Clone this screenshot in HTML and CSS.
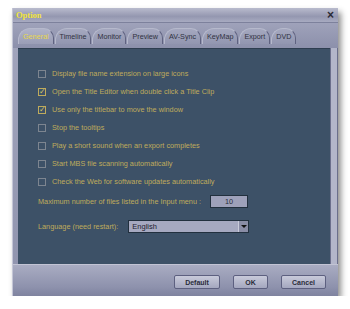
FILE: index.html
```html
<!DOCTYPE html>
<html>

<head>
    <meta charset="UTF-8" />
    <title>Option</title>
    <link rel="stylesheet" href="styles.css">
</head>

<body>
    <div class="window">
        <div class="titlebar">
            <span class="title">Option</span>
            <span class="close">&times;</span>
        </div>
        <div class="tabs">
            <span class="tab active">General</span>
            <span class="tab">Timeline</span>
            <span class="tab">Monitor</span>
            <span class="tab">Preview</span>
            <span class="tab">AV-Sync</span>
            <span class="tab">KeyMap</span>
            <span class="tab">Export</span>
            <span class="tab">DVD</span>
        </div>
        <div class="body">
            <div class="panel">
                <label class="option"><span class="box"></span>Display file name extension on large icons</label>
                <label class="option"><span class="box checked">&#10003;</span>Open the Title Editor when double click a Title Clip</label>
                <label class="option"><span class="box checked">&#10003;</span>Use only the titlebar to move the window</label>
                <label class="option"><span class="box"></span>Stop the tooltips</label>
                <label class="option"><span class="box"></span>Play a short sound when an export completes</label>
                <label class="option"><span class="box"></span>Start MBS file scanning automatically</label>
                <label class="option"><span class="box"></span>Check the Web for software updates automatically</label>
                <div class="field">
                    <span>Maximum number of files listed in the Input menu :</span>
                    <span class="number">10</span>
                </div>
                <div class="field">
                    <span>Language (need restart):</span>
                    <span class="select">English<span class="arrow"></span></span>
                </div>
            </div>
            <div class="edge"></div>
        </div>
        <div class="footer">
            <button class="btn default">Default</button>
            <button class="btn ok">OK</button>
            <button class="btn cancel">Cancel</button>
        </div>
    </div>
</body>

</html>
```

FILE: styles.css
```css
body {
    margin: 0;
    padding: 0;
    background: #ffffff;
    font-family: "Liberation Sans", Arial, sans-serif;
}

.window {
    margin: 8px 0 0 12px;
    width: 326px;
    height: 288px;
    display: flex;
    flex-direction: column;
    background: linear-gradient(#a3a6bd, #8f93ad);
    box-shadow: 3px 4px 6px rgba(0, 0, 0, 0.45);
    border-left: 1px solid #c4c6d6;
    box-sizing: border-box;
}

.titlebar {
    height: 14px;
    display: flex;
    align-items: center;
    justify-content: space-between;
    padding: 0 4px 0 3px;
    background: linear-gradient(#b9bbcd, #9497b0 60%, #a8abc1);
    border-bottom: 1px solid #7d819c;
}

.title {
    font-family: "Liberation Serif", serif;
    font-weight: bold;
    font-size: 8.5px;
    color: #f2e63a;
}

.close {
    font-size: 12px;
    font-weight: bold;
    color: #2a2a35;
    line-height: 10px;
}

.tabs {
    height: 25px;
    display: flex;
    align-items: flex-end;
    padding: 0 0 4px 5px;
    box-sizing: border-box;
    background: linear-gradient(#9fa2ba, #8c90ab);
}

.tab {
    height: 15px;
    padding: 0 4px;
    margin-right: 1px;
    display: flex;
    align-items: center;
    font-size: 7.2px;
    color: #30323f;
    border-top: 1px solid #b6b9cc;
    border-left: 1px solid #b6b9cc;
    border-right: 1px solid #5f6280;
    border-radius: 12px 10px 0 0;
    background: linear-gradient(#a5a8bf, #9296b0);
}

.tab.active {
    color: #e8d84a;
    background: linear-gradient(#b0b3c8, #9a9db6);
}

.body {
    height: 216px;
    display: flex;
    padding-left: 5px;
}

.panel {
    width: 314px;
    background: #3d5167;
    border-top: 1px solid #2e3e50;
    padding: 19px 0 0 20px;
    box-sizing: border-box;
    display: flex;
    flex-direction: column;
    gap: 7px;
    font-size: 7.3px;
    color: #bfab5c;
}

.edge {
    width: 6px;
    border-left: 1px solid #6b6f8c;
    border-right: 1px solid #6b6f8c;
    background: #b3b6ca;
}

.option {
    height: 11px;
    display: flex;
    align-items: center;
}

.box {
    width: 6px;
    height: 6px;
    border: 1px solid #7d8590;
    margin-right: 6px;
    font-size: 8px;
    line-height: 6px;
    color: #d8c766;
    overflow: visible;
}

.box.checked {
    border-color: #bfab5c;
}

.field {
    height: 12px;
    display: flex;
    align-items: center;
    margin-top: 1px;
}

.number {
    margin-left: 9px;
    width: 36px;
    height: 11px;
    border: 1px solid #22303e;
    background: #9ea1ba;
    color: #2b2d3a;
    text-align: center;
    line-height: 11px;
}

.field + .field {
    margin-top: 6px;
}

.select {
    margin-left: 10px;
    width: 116px;
    height: 11px;
    border: 1px solid #22303e;
    background: #a6a9c0;
    color: #1f2130;
    font-size: 7.5px;
    line-height: 11px;
    padding-left: 3px;
    position: relative;
}

.arrow {
    position: absolute;
    right: 0;
    top: 0;
    width: 9px;
    height: 11px;
    background: #8a8da6;
    border-left: 1px solid #c9cbd9;
}

.arrow::after {
    content: "";
    position: absolute;
    left: 2px;
    top: 4px;
    border-left: 3px solid transparent;
    border-right: 3px solid transparent;
    border-top: 3px solid #111;
}

.footer {
    flex: 1;
    display: flex;
    align-items: center;
    justify-content: flex-end;
    padding: 3px 12px 0 0;
    border-top: 1px solid #c2c4d4;
    background: linear-gradient(#a9acc2, #8e92ad 70%, #7f839f);
}

.btn {
    height: 14px;
    padding: 0;
    font-family: "Liberation Sans", Arial, sans-serif;
    font-size: 7px;
    font-weight: bold;
    color: #2a2c3a;
    border: 1px solid #5d6080;
    border-radius: 2px;
    background: linear-gradient(#c8cada, #a4a7bf);
    margin-left: 13px;
}

.default {
    width: 46px;
}

.ok {
    width: 35px;
}

.cancel {
    width: 45px;
}
```
